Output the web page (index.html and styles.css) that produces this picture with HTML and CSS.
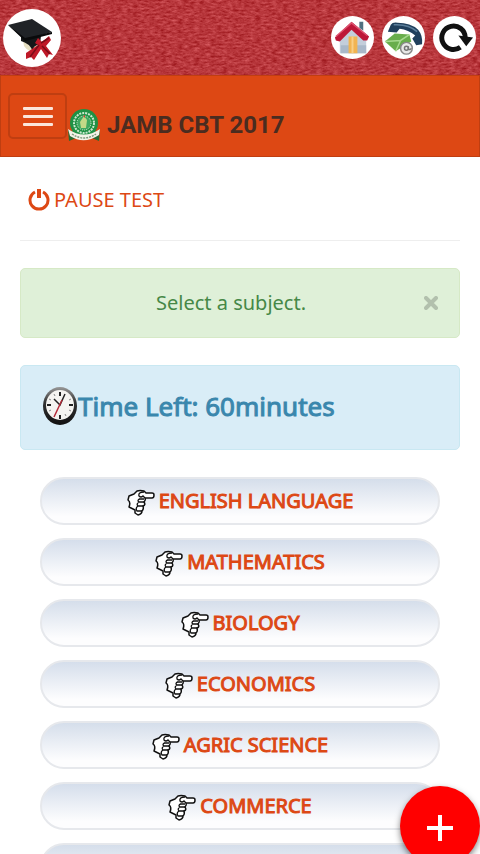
FILE: index.html
```html
<!DOCTYPE html>
<html lang="en">
<head>
  <meta charset="UTF-8">
  <meta name="viewport" content="width=device-width, initial-scale=1.0">
  <title>JAMB CBT 2017</title>
  <link rel="stylesheet" href="styles.css">
</head>
<body>

  <svg class="defs" width="0" height="0" aria-hidden="true">
    <symbol id="hand" viewBox="0 0 28 27">
      <path d="M2 7 L7 5 L10 2 Q13 1 17 2 L19 4 H25 Q27 4 27 6 Q27 9 25 9 H18 Q19 11 17 13 Q19 16 16 17 Q17 20 15 22 Q15 25 11 26 L8 24 V21 L2 18 Q4 13 1 11 Z" fill="#fff" stroke="#111" stroke-width="1.5" stroke-linejoin="round"/>
      <path d="M17 3 Q11 3 12 7 Q14 9 16 7 L18 9 M12 10 H17 M17 13 H12 Q10 12 12 10 M16 17 H11 Q9 15 12 13 M15 22 H10 Q8 19 11 17" fill="none" stroke="#111" stroke-width="1.3"/>
    </symbol>
  </svg>

  <header class="topbar">
    <svg class="texture" aria-hidden="true">
      <filter id="leather" x="0" y="0" width="100%" height="100%" color-interpolation-filters="sRGB">
        <feTurbulence type="fractalNoise" baseFrequency="0.18 0.5" numOctaves="3" seed="4"/>
        <feColorMatrix values="0.3 0 0 0 0.57  0.35 0 0 0 0.04  0.35 0 0 0 0.06  0 0 0 0 1"/>
      </filter>
      <rect width="100%" height="100%" filter="url(#leather)"/>
    </svg>
    <a class="logo" href="#" aria-label="Home page">
      <svg viewBox="0 0 58 58" width="58" height="58">
        <path d="M20 31 L35 34 L33 43 Q25 43 21 37 Z" fill="#e5dfc2"/>
        <path d="M18 28 L38 27 L37 35 Q29 37 30 42 Q26 34 18 32 Z" fill="#151719"/>
        <path d="M5 16 L29 10 L49 23 L22 31 Z" fill="#202327"/>
        <path d="M5 16 L22 29 L49 23 L49 25 L22 32 Z" fill="#090a0b"/>
        <path d="M35 36 L23 44 L23 50 L28 48 L31 51 L38 40 L44 49 L46 45 L50 46 L43 37 L48 31 L46 27 L39 33 L35 29 L32 34 Z" fill="#bf1828"/>
        <path d="M36 36 L27 48 M39 37 L47 45 M38 34 L46 29" stroke="#790d18" stroke-width="1.5"/>
      </svg>
    </a>
    <nav class="shortcuts">
      <a href="#" aria-label="Home">
        <svg viewBox="0 0 44 44" width="43" height="43">
          <path d="M29 6 h4 v9 l-4 -3z" fill="#507080"/>
          <path d="M9 22 L21 12 L36 23 V38 H9 Z" fill="#c3cedb"/>
          <path d="M10 30 H36 V38 H10 Z" fill="#a9b8c9"/>
          <path d="M18 21 h9 v17 h-9 z" fill="#f1b452"/>
          <path d="M22 21 v17" stroke="#f8cf87" stroke-width="2"/>
          <path d="M4 22 L21 6 L39 21 L37 25 L33 25 L21 14 L9 26 L5 25 Z" fill="#bd1738"/>
          <path d="M5 21 L21 7 L37 20" fill="none" stroke="#dc5370" stroke-width="1.5"/>
        </svg>
      </a>
      <a href="#" aria-label="Contact">
        <svg viewBox="0 0 44 44" width="43" height="43">
          <path d="M6 16 L9 9 Q11 6 16 7 Q29 7 37 14 Q42 20 41 29 L35 30 L31 23 L34 20 Q27 14 18 13 L15 17 Z" fill="#203f5c"/>
          <path d="M12 9 Q27 8 36 16" fill="none" stroke="#5c7f9b" stroke-width="1.5"/>
          <path d="M3 26 L13 18 L28 19 L30 26 L14 36 Z" fill="#68ad4c"/>
          <path d="M3 26 L19 25 L28 19 M14 36 L19 25" fill="none" stroke="#a6d98e" stroke-width="1.5"/>
          <circle cx="25" cy="33" r="6" fill="#e8e8e8" stroke="#888" stroke-width="1.5"/>
          <circle cx="25" cy="33" r="2" fill="none" stroke="#777" stroke-width="1.5"/>
          <path d="M27 31 v3 q2 1 3 -1" fill="none" stroke="#777" stroke-width="1.5"/>
        </svg>
      </a>
      <a href="#" aria-label="Reload">
        <svg viewBox="0 0 44 44" width="43" height="43">
          <path d="M28 32 A12 12 0 1 1 33 22" fill="none" stroke="#111" stroke-width="5"/>
          <path d="M26 20 L41 22 L34 31 Z" fill="#111"/>
        </svg>
      </a>
    </nav>
  </header>

  <div class="navbar">
    <button class="menu-btn" aria-label="Menu">
      <span></span>
      <span></span>
      <span></span>
    </button>
    <a class="brand" href="#">
      <svg viewBox="0 0 34 34" width="34" height="34" aria-hidden="true">
        <path d="M1 22 L8 24 L27 24 L33 22 L32 33 L25 30 H9 L2 33 Z" fill="#286b32"/>
        <circle cx="17" cy="15" r="14" fill="#1f9144"/>
        <circle cx="17" cy="15" r="10" fill="none" stroke="#cce8d0" stroke-width="2" stroke-dasharray="2 1"/>
        <circle cx="17" cy="15" r="7" fill="#3da860" stroke="#dceedb" stroke-dasharray="1 1"/>
        <path d="M15 11 L17 8 L20 12 L19 20 H14 L13 14 Z" fill="#c2d987"/>
        <path d="M16 8 l2 -1 v3 z" fill="#c64431"/>
        <path d="M1 21 Q17 32 33 21 L32 27 Q17 37 3 28 Z" fill="#f4f3e8"/>
        <path d="M5 26 Q17 34 29 26" fill="none" stroke="#7c9a7d" stroke-width="1.5" stroke-dasharray="2 1"/>
      </svg>
      <span>JAMB CBT 2017</span>
    </a>
  </div>

  <main class="content">
    <a class="pause" href="#">
      <svg viewBox="0 0 22 22" width="22" height="22" aria-hidden="true">
        <path d="M7 3 A9 9 0 1 0 15 3" fill="none" stroke="currentColor" stroke-width="3"/>
        <path d="M11 0 V9" stroke="currentColor" stroke-width="4"/>
      </svg>
      <span>PAUSE TEST</span>
    </a>
    <hr>

    <div class="alert alert-success">
      <span>Select a subject.</span>
      <button class="close-btn" aria-label="Close">
        <svg viewBox="0 0 14 14" width="14" height="14"><path d="M2 2 L12 12 M12 2 L2 12" stroke="currentColor" stroke-width="4" stroke-linecap="round"/></svg>
      </button>
    </div>

    <div class="alert alert-info">
      <svg viewBox="0 0 36 40" width="36" height="40" aria-hidden="true">
        <defs>
          <linearGradient id="rim" x1="0" y1="0" x2="0" y2="1">
            <stop offset="0" stop-color="#999"/>
            <stop offset="0.4" stop-color="#333"/>
            <stop offset="1" stop-color="#111"/>
          </linearGradient>
        </defs>
        <ellipse cx="18" cy="20" rx="17" ry="19" fill="url(#rim)"/>
        <ellipse cx="18" cy="19" rx="14" ry="15" fill="#f5f4f1"/>
        <path d="M18 6 v4 M18 29 v4 M5 19 h4 M27 19 h4" stroke="#222" stroke-width="2"/>
        <path d="M12 8 l1 2 M24 30 l-1 -2 M7 13 l2 1 M29 25 l-2 -1 M7 25 l2 -1 M29 13 l-2 1" stroke="#888"/>
        <path d="M12 13 L18 19 L23 8" fill="none" stroke="#222" stroke-width="1.5"/>
        <path d="M20 14 L12 31" stroke="#b42a38" stroke-width="1.5"/>
      </svg>
      <span>Time Left: 60minutes</span>
    </div>

    <div class="subjects">
      <a class="subject" href="#"><svg width="28" height="27"><use href="#hand"/></svg><span>ENGLISH LANGUAGE</span></a>
      <a class="subject" href="#"><svg width="28" height="27"><use href="#hand"/></svg><span>MATHEMATICS</span></a>
      <a class="subject" href="#"><svg width="28" height="27"><use href="#hand"/></svg><span>BIOLOGY</span></a>
      <a class="subject" href="#"><svg width="28" height="27"><use href="#hand"/></svg><span>ECONOMICS</span></a>
      <a class="subject" href="#"><svg width="28" height="27"><use href="#hand"/></svg><span>AGRIC SCIENCE</span></a>
      <a class="subject" href="#"><svg width="28" height="27"><use href="#hand"/></svg><span>COMMERCE</span></a>
      <div class="subject"></div>
    </div>
  </main>

  <button class="fab" aria-label="Add">
    <svg viewBox="0 0 26 26" width="26" height="26"><path d="M13 0 V26 M0 13 H26" stroke="#fff" stroke-width="4"/></svg>
  </button>

</body>
</html>
```
FILE: styles.css
```css
* {
  box-sizing: border-box;
}

body {
  height: 100vh;
  margin: 0;
  overflow: hidden;
  background-color: #fff;
  font-family: "Noto Sans", sans-serif;
  font-size: 20px;
  line-height: 28px;
}

a {
  color: #dd4814;
  text-decoration: none;
}

svg {
  display: block;
  flex: none;
}

button {
  padding: 0;
  border: none;
  background: none;
  cursor: pointer;
}

.defs {
  position: absolute;
}

.topbar {
  position: relative;
  display: flex;
  justify-content: space-between;
  align-items: center;
  height: 75px;
  padding: 0 4px 0 3px;
  background-color: #b8383f;
}

.texture {
  position: absolute;
  top: 0;
  left: 0;
  width: 100%;
  height: 100%;
}

.logo, .shortcuts {
  position: relative;
}

.logo, .shortcuts a {
  overflow: hidden;
  border-radius: 50%;
  background-color: #fff;
}

.shortcuts {
  display: flex;
  gap: 8px;
}

.navbar {
  display: flex;
  align-items: center;
  height: 82px;
  padding: 0 7px;
  background-color: #dd4814;
  border: 1px solid #bf3e11;
}

.menu-btn {
  display: flex;
  flex-direction: column;
  justify-content: center;
  align-items: center;
  gap: 5px;
  width: 59px;
  height: 46px;
  border: 2px solid #bf3e11;
  border-radius: 5px;
}

.menu-btn span {
  width: 30px;
  height: 3px;
  border-radius: 1px;
  background-color: #fbe6dc;
}

.brand {
  display: flex;
  align-items: center;
  gap: 6px;
  padding-top: 18px;
  color: #4a2c20;
  font-family: Roboto, sans-serif;
  font-size: 24px;
  font-weight: bold;
}

.content {
  padding: 29px 20px 0;
}

.pause {
  display: flex;
  align-items: center;
  gap: 4px;
  padding-left: 8px;
}

hr {
  height: 1px;
  margin: 26px 0 27px;
  border: none;
  background-color: #eee;
}

.alert {
  display: flex;
  align-items: center;
  margin-bottom: 27px;
  padding: 20px 21px;
  border: 1px solid;
  border-radius: 5px;
}

.alert-success {
  justify-content: center;
  position: relative;
  padding-right: 39px;
  background-color: #dff0d8;
  border-color: #d6e9c6;
  color: #468847;
}

.close-btn {
  position: absolute;
  right: 21px;
  color: #b2c0ad;
}

.alert-info {
  padding-bottom: 23px;
  background-color: #d9edf7;
  border-color: #c9e8f2;
  color: #3a87ad;
  font-size: 26px;
  -webkit-text-stroke: 1px;
}

.subjects {
  display: flex;
  flex-direction: column;
  gap: 13px;
  padding: 0 20px;
}

.subject {
  display: flex;
  justify-content: center;
  align-items: center;
  gap: 4px;
  height: 48px;
  border: 2px solid #e6e8ec;
  border-radius: 24px;
  background: linear-gradient(#d5deeb, #fdfdfe 85%);
  -webkit-text-stroke: 1px;
}

.subject svg {
  margin-top: 2px;
}

.fab {
  position: fixed;
  right: 0;
  bottom: -12px;
  display: flex;
  justify-content: center;
  align-items: center;
  width: 80px;
  height: 80px;
  padding-top: 4px;
  border-radius: 50%;
  background-color: #f00;
  box-shadow: 0 3px 6px rgba(0, 0, 0, 0.5);
}
```
